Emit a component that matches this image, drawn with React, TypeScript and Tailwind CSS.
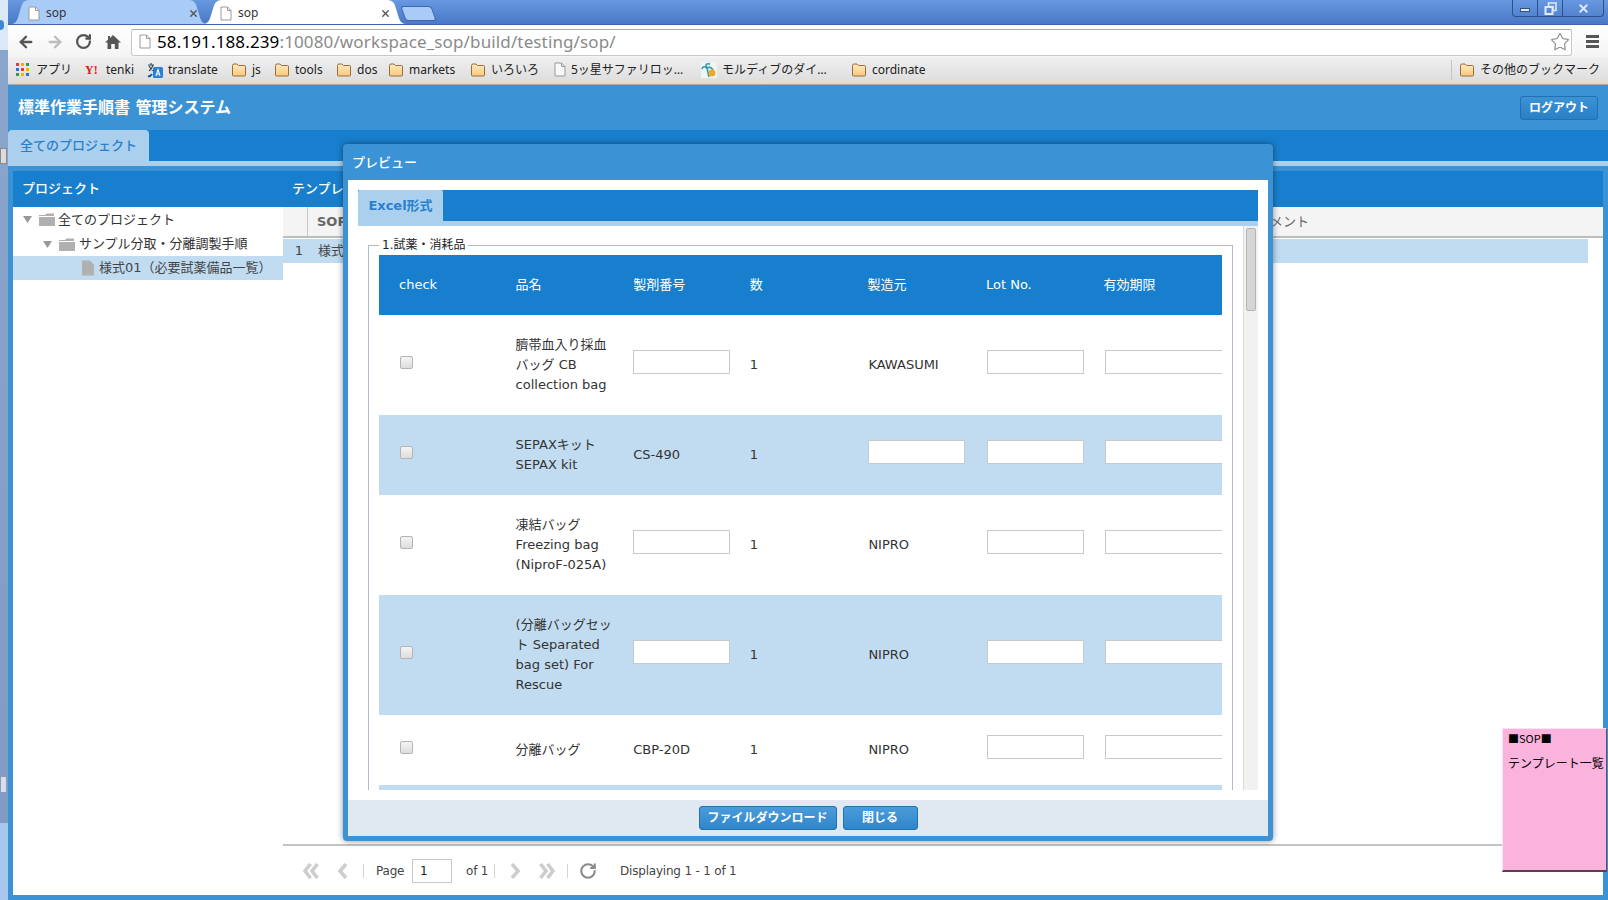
import React from "react";
import { ArrowLeft, ArrowRight, RotateCw, Star, X } from "lucide-react";

const Folder: React.FC = () => (
  <svg width="16" height="14" viewBox="0 0 16 14" className="shrink-0">
    <defs>
      <linearGradient id="fold" x1="0" y1="0" x2="0" y2="1">
        <stop offset="0" stopColor="#ffe9bf" />
        <stop offset="1" stopColor="#fbc87a" />
      </linearGradient>
    </defs>
    <path
      d="M1.5 2.5 Q1.5 1 3 1 H6 L7.5 2.5 H13.5 Q14.5 2.5 14.5 3.5 V12 Q14.5 13 13.5 13 H2.5 Q1.5 13 1.5 12 Z"
      fill="url(#fold)"
      stroke="#94703f"
      strokeWidth="1"
    />
  </svg>
);

const Doc: React.FC<{ fill?: string; stroke?: string; w?: number; h?: number }> = ({
  fill = "#ffffff",
  stroke = "#9a9a9a",
  w = 12,
  h = 15,
}) => (
  <svg width={w} height={h} viewBox="0 0 12 15" className="shrink-0">
    <path d="M1 1 H7.5 L11 4.5 V14 H1 Z" fill={fill} stroke={stroke} />
    <path d="M7.5 1 V4.5 H11" fill="none" stroke={stroke} />
  </svg>
);

const AppsIcon: React.FC = () => {
  const colors = ["#e33b2e", "#f5b400", "#2f9e44", "#2f6fd8", "#e33b2e", "#f5b400", "#2f9e44", "#f5b400", "#2f6fd8"];
  return (
    <div className="grid grid-cols-3 gap-[2px] w-[13px] shrink-0">
      {colors.map((c, i) => (
        <div key={i} className="w-[3px] h-[3px]" style={{ backgroundColor: c }} />
      ))}
    </div>
  );
};

const TabShape: React.FC<{ fill: string }> = ({ fill }) => (
  <svg viewBox="0 0 200 24" preserveAspectRatio="none" className="absolute inset-0 w-full h-full">
    <path d="M0 24 Q5 24 7 18 L11 5 Q13 0 19 0 H181 Q187 0 189 5 L193 18 Q195 24 200 24 Z" fill={fill} />
  </svg>
);

const BrowserTab: React.FC<{ active?: boolean; className: string; closeGap: string }> = ({ active, className, closeGap }) => (
  <div className={`relative h-[24px] flex items-center ${className}`}>
    <TabShape fill={active ? "#ffffff" : "#a9ccf6"} />
    <div className={`relative flex items-center w-full pl-[17px] pt-[2px] font-['Noto_Sans',sans-serif] text-[12px] text-[#333] ${closeGap}`}>
      <Doc />
      <span className="ml-[6px]">sop</span>
      <X size={11} strokeWidth={3} className="ml-auto text-[#555]" />
    </div>
  </div>
);

const BookmarkItem: React.FC<{ icon: React.ReactNode; label: string; className: string }> = ({ icon, label, className }) => (
  <div className={`flex items-center gap-[5px] shrink-0 whitespace-nowrap ${className}`}>
    {icon}
    <span>{label}</span>
  </div>
);

const TreeFolder: React.FC = () => (
  <svg width="16" height="13" viewBox="0 0 16 13" className="shrink-0">
    <path d="M0 2 H6 L7.5 0.5 H15 V3 H0 Z M0 4 H16 V13 H0 Z" fill="#b0b0b0" />
  </svg>
);

const TreeArrow: React.FC = () => (
  <svg width="9" height="7" viewBox="0 0 9 7" className="shrink-0">
    <path d="M0 0 H9 L4.5 7 Z" fill="#999" />
  </svg>
);

// thick pager chevrons; points give one or two strokes
const PagerArrow: React.FC<{ d: string; w: number; className?: string }> = ({ d, w, className }) => (
  <svg width={w} height="16" viewBox={`0 0 ${w} 16`} className={`shrink-0 ${className ?? ""}`}>
    <path d={d} fill="none" stroke="#cdcdcd" strokeWidth="3.6" />
  </svg>
);

const Field: React.FC<{ w?: string }> = ({ w = "w-[97px]" }) => (
  <div className={`h-[24px] mb-[6px] bg-white border border-[#c9c9c9] shrink-0 ${w}`} />
);

type Row = {
  name: string[];
  lot: string | null;
  maker: string | null;
};

const rows: Row[] = [
  { name: ["臍帯血入り採血", "バッグ CB", "collection bag"], lot: null, maker: "KAWASUMI" },
  { name: ["SEPAXキット", "SEPAX kit"], lot: "CS-490", maker: null },
  { name: ["凍結バッグ", "Freezing bag", "(NiproF-025A)"], lot: null, maker: "NIPRO" },
  { name: ["(分離バッグセッ", "ト Separated", "bag set) For", "Rescue"], lot: null, maker: "NIPRO" },
  { name: ["分離バッグ"], lot: "CBP-20D", maker: "NIPRO" },
];

const columns = ["check", "品名", "製剤番号", "数", "製造元", "Lot No.", "有効期限"];
const headPad = ["pl-[20px]", "pl-[19px]", "pl-[19px]", "pl-[18px]", "pl-[18px]", "pl-[19px]", "pl-[19px]"];

const PreviewModal: React.FC = () => (
  <div className="absolute left-[343px] top-[144px] w-[930px] h-[697px] bg-[#3b92d5] rounded-[4px] shadow-[0_0_6px_rgba(0,0,0,0.45)] px-[5px] pb-[5px] flex flex-col">
    <div className="h-[36px] shrink-0 flex items-center pl-[4px] pt-[1px] text-[13px] text-white font-medium">プレビュー</div>
    <div className="flex-1 bg-white flex flex-col min-h-0">
      <div className="flex-1 px-[10px] pt-[10px] pb-[10px] flex flex-col min-h-0">
        <div className="h-[31px] bg-[#187fce] shrink-0">
          <div className="w-[85px] h-[31px] bg-[#abd0ee] rounded-t-[2px] flex items-center justify-center text-[13px] font-bold text-[#2a7fcb]">
            Excel形式
          </div>
        </div>
        <div className="h-[5px] bg-[#abd0ee] shrink-0" />
        <div className="flex-1 flex min-h-0">
          <div className="flex-1 overflow-hidden pt-[12px] px-[10px]">
            <fieldset className="border border-[#b5b8c8] px-[10px] pb-[10px]">
              <legend className="px-[3px] text-[12px] leading-[14px] text-[#222]">1.試薬・消耗品</legend>
              <div className="mt-[3px]">
                <div className="grid grid-cols-[repeat(6,117.6px)_1fr] h-[60px] bg-[#187fce] items-center text-white text-[13px]">
                  {columns.map((c, i) => (
                    <div key={c} className={headPad[i]}>
                      {c}
                    </div>
                  ))}
                </div>
                {rows.map((r, i) => (
                  <div
                    key={i}
                    className={`grid grid-cols-[repeat(6,117.6px)_1fr] py-[20px] min-h-[70px] items-center text-[13px] leading-[20px] text-[#333] ${
                      i % 2 === 1 ? "bg-[#c1dcf1]" : "bg-white"
                    }`}
                  >
                    <div className="pl-[21px]">
                      <div className="w-[13px] h-[13px] mb-[5px] rounded-[2px] border border-[#b4b4b4] bg-gradient-to-b from-[#f4f4f4] to-[#dedede]" />
                    </div>
                    <div className="pl-[19px] whitespace-nowrap">
                      {r.name.map((n) => (
                        <div key={n}>{n}</div>
                      ))}
                    </div>
                    <div className="pl-[19px]">{r.lot ? r.lot : <Field />}</div>
                    <div className="pl-[18px]">1</div>
                    <div className="pl-[19px]">{r.maker ? r.maker : <Field />}</div>
                    <div className="pl-[20px]">
                      <Field />
                    </div>
                    <div className="pl-[20px] overflow-hidden">
                      <Field w="w-[140px]" />
                    </div>
                  </div>
                ))}
                <div className="h-[40px] bg-[#c1dcf1]" />
              </div>
            </fieldset>
          </div>
          <div className="w-[15px] shrink-0 bg-[#f1f1f1] border-l border-[#dcdcdc] pt-[2px] pl-[2px]">
            <div className="w-[10px] h-[83px] bg-[#d6d6d6] border border-[#b4b4b4] rounded-[2px]" />
          </div>
        </div>
      </div>
      <div className="h-[36px] shrink-0 bg-[#e0e9f2] flex items-center justify-center gap-[6px]">
        <button className="w-[138px] h-[24px] rounded-[3px] border border-[#2170b0] bg-gradient-to-b from-[#4a9bdb] to-[#2f86cb] text-[12px] font-bold text-white">
          ファイルダウンロード
        </button>
        <button className="w-[75px] h-[24px] rounded-[3px] border border-[#2170b0] bg-gradient-to-b from-[#4a9bdb] to-[#2f86cb] text-[12px] font-bold text-white">
          閉じる
        </button>
      </div>
    </div>
  </div>
);

const Pager: React.FC = () => (
  <div className="h-[51px] shrink-0 border-t-2 border-[#c4c4c4] flex items-center text-[12px] tracking-[-0.2px] text-[#444] pl-[20px]">
    <PagerArrow w={16} d="M7.5 1 L2 8 L7.5 15 M14.5 1 L9 8 L14.5 15" />
    <PagerArrow w={11} d="M9 1 L3 8 L9 15" className="ml-[18px]" />
    <div className="ml-[15px] w-px h-[14px] bg-[#d4d4d4]" />
    <span className="ml-[12px] w-[36px] shrink-0">Page</span>
    <div className="w-[40px] h-[24px] border border-[#c9c9c9] flex items-center pl-[7px] text-[#222]">1</div>
    <span className="ml-[14px] w-[28px] shrink-0">of 1</span>
    <div className="w-px h-[14px] bg-[#d4d4d4]" />
    <PagerArrow w={10} d="M2 1 L8 8 L2 15" className="ml-[15px]" />
    <PagerArrow w={16} d="M1.5 1 L7 8 L1.5 15 M8.5 1 L14 8 L8.5 15" className="ml-[19px]" />
    <div className="ml-[12px] w-px h-[14px] bg-[#d4d4d4]" />
    <RotateCw size={18} strokeWidth={2.8} className="ml-[11px] text-[#8a8a8a]" />
    <span className="ml-[23px]">Displaying 1 - 1 of 1</span>
  </div>
);

const App: React.FC = () => {
  return (
    <div className="relative w-[1608px] h-[900px] overflow-hidden flex font-['DejaVu_Sans','Noto_Sans_CJK_JP',sans-serif]">
      {/* desktop sliver on the left */}
      <div className="w-[8px] shrink-0 flex flex-col bg-gradient-to-b from-[#8ba6cc] to-[#7f9bc4]">
        <div className="h-[50px] bg-[#dbe8f8] flex items-center">
          <div className="w-[4px] h-[10px] rounded-r-full bg-[#3f86d0]" />
        </div>
        <div className="mt-[98px] w-[7px] h-[16px] bg-[#dcdcdc] border border-[#8a8a8a]" />
        <div className="mt-[612px] w-[7px] h-[17px] bg-[#d8dfea] border border-[#8a9ab8]" />
        <div className="flex-1 mt-[30px] bg-[#a9c6ef]" />
      </div>

      <div className="flex-1 flex flex-col min-w-0">
        {/* tab strip */}
        <div className="h-[25px] shrink-0 flex items-end border-b border-[#3f66ad] bg-gradient-to-b from-[#6898e0] to-[#4a78c6] pl-[3px] relative">
          <BrowserTab className="w-[196px]" closeGap="pr-[8px]" />
          <BrowserTab active className="w-[203px] -ml-[4px]" closeGap="pr-[15px]" />
          <div className="w-[31px] h-[15px] mb-[3px] -ml-[3px] bg-[#a9ccf6] rounded-[3px] border border-[#3f66ad] skew-x-[20deg]" />
          <div className="absolute right-[4px] top-0 w-[92px] h-[17px] flex border border-t-0 border-[#2f4f8a] rounded-b-[4px] text-[#dfe9f8]">
            <div className="w-[25px] flex items-center justify-center border-r border-[#2f4f8a]">
              <div className="w-[10px] h-[4px] bg-[#dfe9f8] border border-[#34517f] mt-[3px]" />
            </div>
            <div className="w-[25px] flex items-center justify-center border-r border-[#2f4f8a]">
              <svg width="13" height="13" viewBox="0 0 13 13">
                <path d="M4.5 1 H12 V8.5 H9 V4.5 H4.5 Z" fill="none" stroke="#dfe9f8" strokeWidth="1.6" />
                <rect x="1.5" y="5" width="7" height="7" fill="none" stroke="#dfe9f8" strokeWidth="2" />
              </svg>
            </div>
            <div className="flex-1 flex items-center justify-center">
              <X size={13} strokeWidth={3.5} />
            </div>
          </div>
        </div>

        {/* toolbar */}
        <div className="h-[32px] shrink-0 bg-gradient-to-b from-white to-[#f4f4f4] flex pt-[4px]">
          <div className="w-[123px] shrink-0 flex items-center -mt-[3px] pl-[9px] text-[#555]">
            <ArrowLeft size={18} strokeWidth={3.2} />
            <ArrowRight size={18} strokeWidth={3.2} className="ml-[11px] text-[#bdbdbd]" />
            <RotateCw size={17} strokeWidth={3.2} className="ml-[11px]" />
            <svg width="16" height="16" viewBox="0 0 16 16" className="ml-[13px]">
              <path d="M8 1 L16 8.5 H13.5 V15 H9.8 V10 H6.2 V15 H2.5 V8.5 H0 L3 5.7 V2 H5 V3.9 Z" fill="#555" />
            </svg>
          </div>
          <div className="w-[1441px] h-[27px] shrink-0 bg-white border border-[#c8c8c8] border-t-[#aaa] rounded-t-[2px] rounded-b-[3px] flex items-center pl-[7px] pr-[1px] pb-[2px] font-['Noto_Sans',sans-serif] text-[17px] tracking-[0.13px]">
            <Doc />
            <span className="ml-[6px] text-black">58.191.188.239</span>
            <span className="text-[#8a8a8a]">:10080/workspace_sop/build/testing/sop/</span>
            <Star size={20} strokeWidth={1.4} className="ml-auto text-[#8f8f8f]" />
          </div>
          <div className="flex-1 flex flex-col items-center gap-[2px] pt-[6px] pl-[5px]">
            <div className="w-[13px] h-[3px] bg-[#555]" />
            <div className="w-[13px] h-[3px] bg-[#555]" />
            <div className="w-[13px] h-[3px] bg-[#555]" />
          </div>
        </div>

        {/* bookmarks */}
        <div className="h-[28px] shrink-0 bg-gradient-to-b from-[#efefef] to-[#dcdcdc] border-b border-[#a9a9a9] flex items-center pl-[8px] pb-[2px] font-['Noto_Sans','Noto_Sans_CJK_JP',sans-serif] text-[12px] text-[#222]">
          <BookmarkItem className="w-[69px] gap-[7px]" icon={<AppsIcon />} label="アプリ" />
          <BookmarkItem
            className="w-[62px]"
            icon={<span className="w-[16px] text-[12px] font-bold leading-none text-[#e8141c] font-['Liberation_Serif',serif]">Y!</span>}
            label="tenki"
          />
          <BookmarkItem
            className="w-[84px]"
            icon={
              <svg width="16" height="16" viewBox="0 0 16 16" className="shrink-0">
                <rect x="6" y="5" width="10" height="11" rx="1.5" fill="#2b7fd4" />
                <path d="M1 3 H7 M4 1 V3 M2 9 Q5 7 6 3 M2 4 Q4 8 7 9" stroke="#3a4a5e" strokeWidth="1.2" fill="none" />
                <path d="M1 14 Q3 15 5 12" stroke="#0f5ca8" strokeWidth="2" fill="none" />
                <path d="M9 14 L11 7.5 L13 14 M9.8 12 H12.2" stroke="#fff" strokeWidth="1.1" fill="none" />
              </svg>
            }
            label="translate"
          />
          <BookmarkItem className="w-[43px]" icon={<Folder />} label="js" />
          <BookmarkItem className="w-[62px]" icon={<Folder />} label="tools" />
          <BookmarkItem className="w-[52px]" icon={<Folder />} label="dos" />
          <BookmarkItem className="w-[82px]" icon={<Folder />} label="markets" />
          <BookmarkItem className="w-[84px]" icon={<Folder />} label="いろいろ" />
          <BookmarkItem className="w-[147px]" icon={<Doc fill="#f8f8f8" />} label="5ッ星サファリロッ…" />
          <BookmarkItem
            className="w-[150px]"
            icon={
              <svg width="16" height="16" viewBox="0 0 16 16" className="shrink-0">
                <rect width="16" height="16" fill="#eef5f5" />
                <path d="M8 15 L6 6 M6 6 Q2 3 1 7 M6 6 Q3 1 9 2 M6 6 Q10 4 12 8" stroke="#2e9aa8" strokeWidth="1.6" fill="none" />
                <circle cx="11" cy="11" r="3.5" fill="#f5a623" />
              </svg>
            }
            label="モルディブのダイ…"
          />
          <BookmarkItem className="w-[600px]" icon={<Folder />} label="cordinate" />
          <div className="w-px h-[20px] bg-[#c4c4c4] mr-[7px]" />
          <BookmarkItem className="" icon={<Folder />} label="その他のブックマーク" />
        </div>

        {/* app header */}
        <div className="h-[45px] shrink-0 bg-[#3b92d5] flex items-center justify-between pl-[10px] pr-[10px]">
          <div className="text-[16px] font-bold text-white">標準作業手順書 管理システム</div>
          <button className="w-[78px] h-[24px] rounded-[3px] border border-[#2170b0] bg-gradient-to-b from-[#3b92d5] to-[#2a80c4] text-[12px] font-bold text-white">
            ログアウト
          </button>
        </div>

        {/* project tabs */}
        <div className="h-[31px] shrink-0 bg-[#187fce]">
          <div className="w-[141px] h-[31px] bg-[#abd0ee] rounded-t-[4px] flex items-center justify-center text-[13px] font-medium text-[#2a7fcb]">
            全てのプロジェクト
          </div>
        </div>
        <div className="h-[5px] shrink-0 bg-[#abd0ee]" />

        {/* workspace */}
        <div className="flex-1 min-h-0 bg-[#3b92d5] p-[5px] flex flex-col">
          <div className="h-[36px] shrink-0 bg-[#187fce] flex items-center text-[13px] font-medium text-white">
            <div className="w-[270px] pl-[9px]">プロジェクト</div>
            <div className="pl-[9px]">テンプレート一覧</div>
          </div>
          <div className="flex-1 min-h-0 bg-white flex">
            <div className="w-[270px] shrink-0 text-[13px] text-[#333]">
              <div className="h-[25px] flex items-center pl-[10px]">
                <TreeArrow />
                <div className="ml-[7px]">
                  <TreeFolder />
                </div>
                <span className="ml-[3px]">全てのプロジェクト</span>
              </div>
              <div className="h-[24px] flex items-center pl-[30px]">
                <TreeArrow />
                <div className="ml-[7px]">
                  <TreeFolder />
                </div>
                <span className="ml-[4px]">サンプル分取・分離調製手順</span>
              </div>
              <div className="h-[24px] flex items-center pl-[68px] bg-[#c1dcf1] text-[#444]">
                <Doc fill="#b0b0b0" stroke="#b0b0b0" w={14} h={16} />
                <span className="ml-[4px]">様式01（必要試薬備品一覧）</span>
              </div>
            </div>
            <div className="flex-1 min-w-0 flex flex-col">
              <div className="h-[31px] shrink-0 bg-[#f4f4f4] border-b-2 border-[#bdbdbd] flex items-center text-[13px] text-[#666]">
                <div className="w-[25px] h-full border-r border-[#c8c8c8]" />
                <div className="w-[939px] pl-[9px] font-bold">SOP名</div>
                <div className="pl-[10px]">コメント</div>
              </div>
              <div className="flex-1 min-h-0 pr-[15px] pt-[1px] flex flex-col">
                <div className="h-[24px] shrink-0 bg-[#c1dcf1] flex items-center text-[13px] text-[#444]">
                  <div className="w-[32px] text-center">1</div>
                  <div className="pl-[3px]">様式01</div>
                </div>
                <div className="flex-1" />
              </div>
              <Pager />
            </div>
          </div>
        </div>
      </div>

      <PreviewModal />

      {/* desktop sticky note */}
      <div className="absolute left-[1502px] top-[728px] w-[105px] h-[144px] bg-[#f9b3dd] border-l border-t border-l-[#fde3f2] border-t-[#fde3f2] border-r border-b-2 border-r-[#6b4a60] border-b-[#5b4054] pl-[5px] pt-[2px] font-['Noto_Sans_CJK_JP',sans-serif] text-black">
        <div className="text-[11px] leading-[14px]">■SOP■</div>
        <div className="mt-[10px] text-[12px] leading-[16px] whitespace-nowrap">テンプレート一覧</div>
      </div>
    </div>
  );
};

export default App;
